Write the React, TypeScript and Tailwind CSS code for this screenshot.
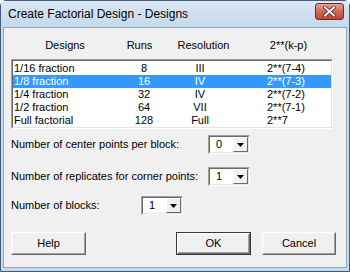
const rows = [
    ['1/16 fraction', '8', 'III', '2**(7-4)'],
    ['1/8 fraction', '16', 'IV', '2**(7-3)'],
    ['1/4 fraction', '32', 'IV', '2**(7-2)'],
    ['1/2 fraction', '64', 'VII', '2**(7-1)'],
    ['Full factorial', '128', 'Full', '2**7'],
];

function Combo({ value }: { value: string }) {
    return (
        <div className="h-[19px] w-[42px] flex-none border border-b-white border-l-[#a0a0a0] border-r-white border-t-[#a0a0a0]">
            <div className="flex h-full w-full border border-b-[#e3e3e3] border-l-[#696969] border-r-[#e3e3e3] border-t-[#696969] bg-white">
                <div className="flex flex-1 items-center pl-[6px] text-[11px] leading-none">{value}</div>
                <div className="flex h-full w-[15px] items-center justify-center border border-b-[#696969] border-l-white border-r-[#696969] border-t-white bg-[#f0f0f0]">
                    <svg width="7" height="4" viewBox="0 0 7 4">
                        <path d="M0 0h7L3.5 4z" fill="#000" />
                    </svg>
                </div>
            </div>
        </div>
    );
}

function Button({ label, isDefault, className }: { label: string; isDefault?: boolean; className?: string }) {
    return (
        <div className={`h-[23px] flex-none ${isDefault ? 'border border-[#3a3a3a]' : ''} ${className ?? ''}`}>
            <div className="h-full w-full border border-b-[#696969] border-l-white border-r-[#696969] border-t-white">
                <div className="flex h-full w-full items-center justify-center border border-b-[#a0a0a0] border-l-[#f4f4f4] border-r-[#a0a0a0] border-t-[#f4f4f4] bg-[#f0f0f0] text-[11px] text-black">
                    {label}
                </div>
            </div>
        </div>
    );
}

export default function App() {
    return (
        <div className="h-[272px] w-[350px] overflow-hidden font-['Liberation_Sans',Arial,sans-serif] text-black">
            <div className="flex h-full w-full flex-col rounded-t-[6px] border border-[#3f5d7d] bg-[#c6d9ed]">
                <div className="flex h-[26px] flex-none items-center justify-between bg-gradient-to-b from-[#dbe7f4] to-[#c4d8ed] pl-[7px] pr-[5px]">
                    <span className="text-[12px] text-black">Create Factorial Design - Designs</span>
                    <div className="mt-[-6px] flex h-[17px] w-[29px] items-center justify-center rounded-[3px] border border-[#7a2a20] bg-gradient-to-b from-[#e6a196] via-[#cf6a5a] to-[#c0432f]">
                        <svg width="13" height="11" viewBox="0 0 13 11">
                            <path d="M2 1.5l9 8M11 1.5l-9 8" stroke="#5a1a12" strokeWidth="3.6" strokeLinecap="square" />
                            <path d="M2 1.5l9 8M11 1.5l-9 8" stroke="#fff" strokeWidth="2" strokeLinecap="square" />
                        </svg>
                    </div>
                </div>
                <div className="mx-[2px] mb-[3px] flex flex-1 flex-col border border-[#8fa7c1] bg-[#f0f0f0] text-[11px]">
                    <div className="flex pl-[7px] pt-[10px] leading-[14px]">
                        <span className="w-[108px] text-center">Designs</span>
                        <span className="w-[41px] text-center">Runs</span>
                        <span className="w-[87px] text-center">Resolution</span>
                        <span className="w-[83px] text-center">2**(k-p)</span>
                    </div>

                    <div className="ml-[7px] mt-[7px] w-[322px] border border-b-white border-l-[#a0a0a0] border-r-white border-t-[#a0a0a0]">
                        <div className="border border-b-[#e3e3e3] border-l-[#696969] border-r-[#e3e3e3] border-t-[#696969] bg-white pt-[1px]">
                            {rows.map((r, i) => (
                                <div
                                    key={r[0]}
                                    className={`grid h-[13px] grid-cols-[111px_40px_72px_1fr] items-center leading-[13px] ${i === 1 ? 'bg-[#3399ff] text-white' : ''}`}
                                >
                                    <span className="pl-[1px]">{r[0]}</span>
                                    <span className="text-center">{r[1]}</span>
                                    <span className="text-center">{r[2]}</span>
                                    <span className="pl-[31px]">{r[3]}</span>
                                </div>
                            ))}
                        </div>
                    </div>

                    <div className="mt-[6px] flex h-[19px] items-center pl-[7px]">
                        <span className="w-[197px] flex-none">Number of center points per block:</span>
                        <Combo value="0" />
                    </div>
                    <div className="mt-[13px] flex h-[19px] items-center pl-[7px]">
                        <span className="w-[197px] flex-none">Number of replicates for corner points:</span>
                        <Combo value="1" />
                    </div>
                    <div className="mt-[10px] flex h-[19px] items-center pl-[7px]">
                        <span className="w-[130px] flex-none">Number of blocks:</span>
                        <Combo value="1" />
                    </div>

                    <div className="mt-[17px] flex pl-[7px]">
                        <Button label="Help" className="w-[75px]" />
                        <Button label="OK" isDefault className="ml-[90px] w-[75px]" />
                        <Button label="Cancel" className="ml-[11px] w-[74px]" />
                    </div>
                </div>
            </div>
        </div>
    );
}
